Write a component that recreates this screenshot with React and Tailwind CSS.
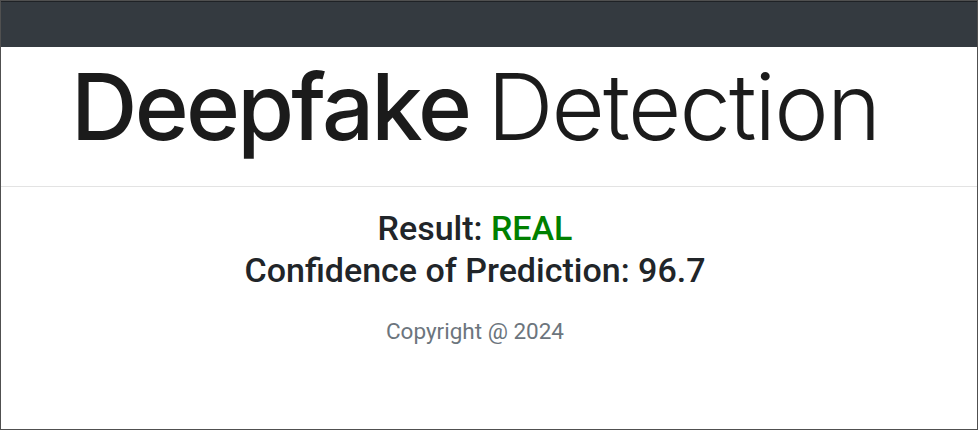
export default function App() {
    return (
        <div className="w-[978px] h-[430px] border border-[#505050] bg-white flex flex-col overflow-hidden" style={{ fontFamily: 'Roboto, "Liberation Sans", sans-serif' }}>
            {/* top nav bar */}
            <div className="h-[46px] bg-[#343a40] border-t border-[#1f2226] shrink-0" />

            {/* logo */}
            <div className="h-[139px] flex items-center pl-[70px]">
                <div
                    className="text-[#1b1b1b] text-[92px] leading-none whitespace-nowrap -mt-[20px] flex items-baseline"
                    style={{ fontFamily: 'Inter, "Liberation Sans", sans-serif' }}
                >
                    <span className="font-medium tracking-[-0.03em]">Deepfake</span>
                    <span className="font-light tracking-[-0.02em] ml-[18px]">Detection</span>
                </div>
            </div>

            <div className="h-px bg-[#e3e3e3]" />

            {/* result */}
            <div className="flex flex-col items-center pt-[20px] pr-[28px] text-[#212529]">
                <h2 className="text-[34px] leading-[42px] font-medium">
                    Result: <span className="text-[#008000]">REAL</span>
                </h2>
                <h2 className="text-[34px] leading-[42px] font-medium">
                    Confidence of Prediction: 96.7
                </h2>
                <p className="mt-[25px] text-[22.5px] leading-[30px] text-[#6c757d]">Copyright @ 2024</p>
            </div>
        </div>
    );
}
